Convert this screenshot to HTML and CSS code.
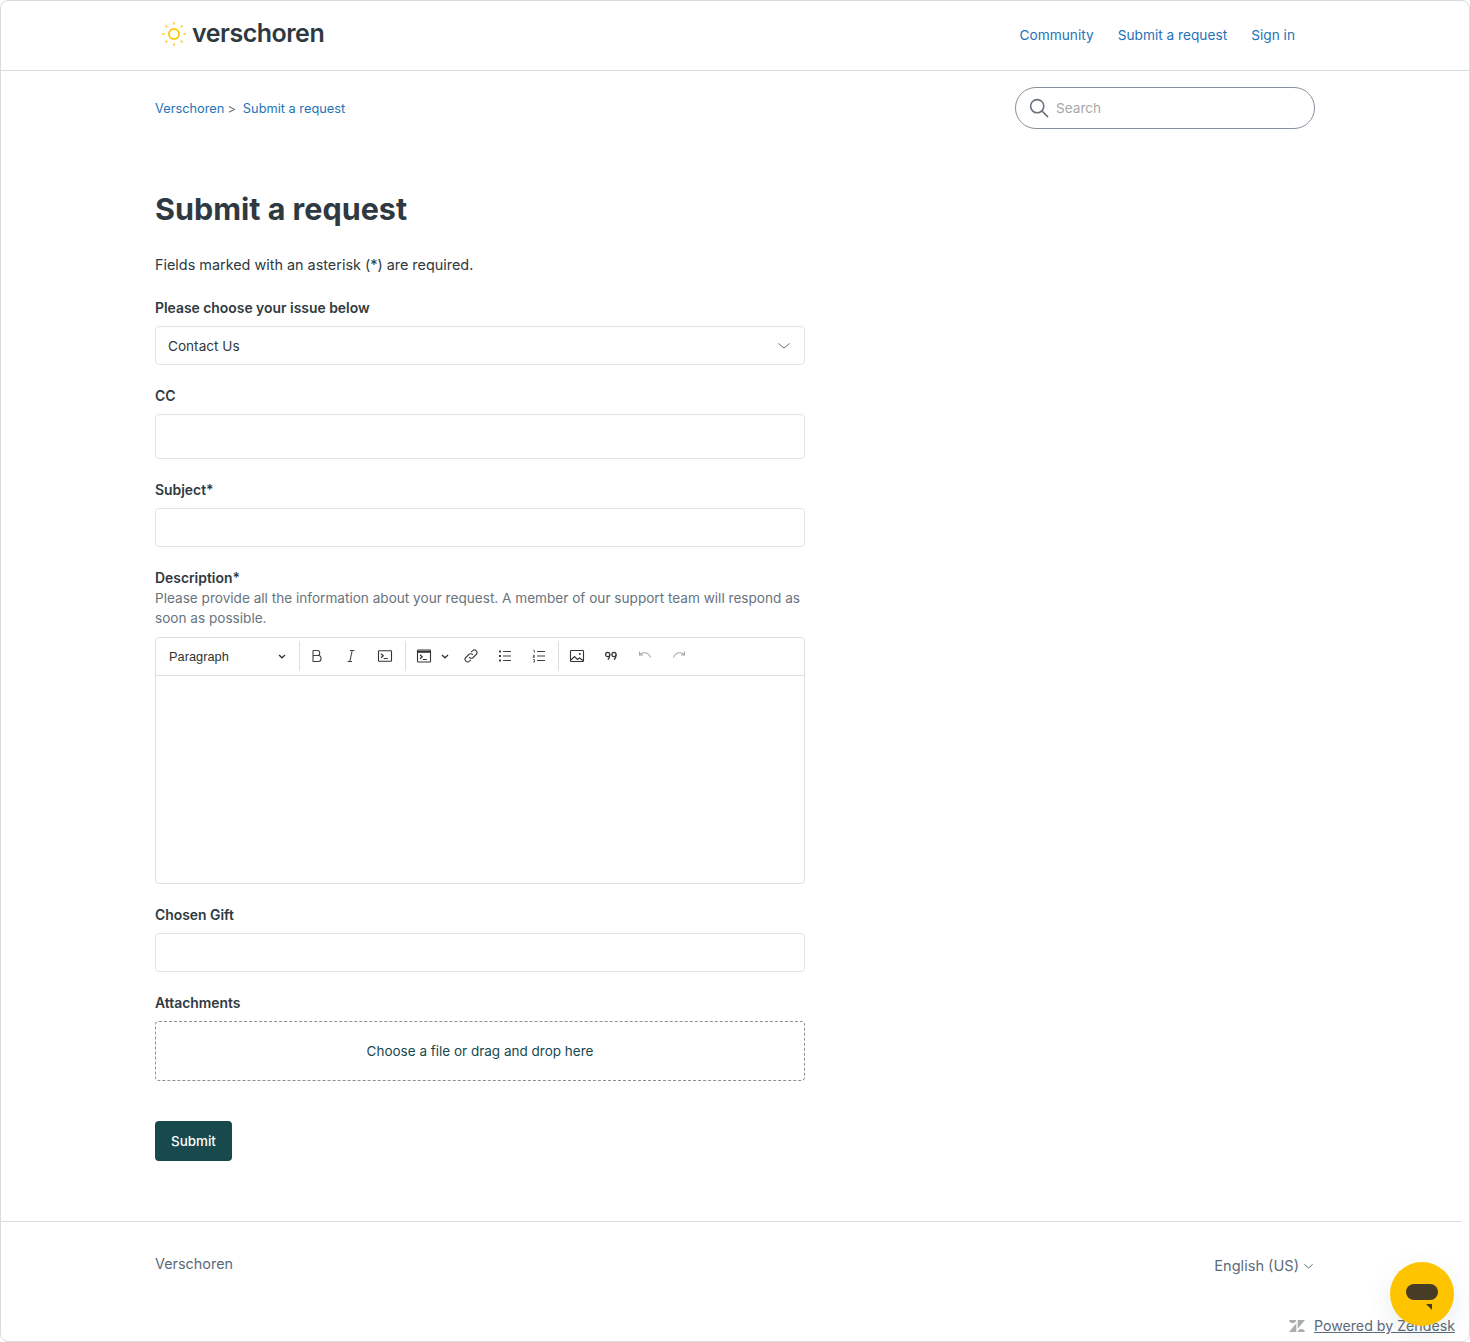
FILE: index.html
```html
<!DOCTYPE html>
<html lang="en">
<head>
    <meta charset="UTF-8">
    <title>Submit a request – Verschoren</title>
    <link rel="stylesheet" href="styles.css">
</head>
<body>
    <div class="frame">
        <header class="site-header">
            <div class="wrap header-inner">
                <a class="logo" href="#">
                    <svg class="logo-sun" width="24" height="24" viewBox="0 0 24 24" fill="none" stroke="#fbcb15">
                        <circle cx="12" cy="12" r="5" stroke-width="2"/>
                        <g stroke-width="1.6" stroke-linecap="round">
                            <path d="M12 .8v1.200M12 22v1.200M.8 12h1.200M22 12h1.200M4.100 4.100l.7.7M19.200 19.200l.7.7M4.100 19.900l.7-.7M19.200 4.800l.7-.7"/>
                        </g>
                    </svg>
                    <span class="logo-text">verschoren</span>
                </a>
                <nav class="top-nav">
                    <a href="#">Community</a>
                    <a href="#">Submit a request</a>
                    <a href="#">Sign in</a>
                </nav>
            </div>
        </header>

        <main class="wrap">
            <div class="sub-nav">
                <ol class="breadcrumbs">
                    <li><a href="#">Verschoren</a><span class="crumb-sep">&gt;</span></li>
                    <li><a href="#">Submit a request</a></li>
                </ol>
                <div class="search">
                    <svg width="20" height="20" viewBox="0 0 20 20" fill="none" stroke="#68737d" stroke-width="1.6" stroke-linecap="round">
                        <circle cx="8.2" cy="8.2" r="6.6"/>
                        <path d="M13 13l5.600 5.600"/>
                    </svg>
                    <span class="search-text">Search</span>
                </div>
            </div>

            <h1>Submit a request</h1>
            <p class="intro">Fields marked with an asterisk (*) are required.</p>

            <form class="request-form">
                <div class="field">
                    <label>Please choose your issue below</label>
                    <div class="input select">
                        <span>Contact Us</span>
                        <svg width="12" height="6" viewBox="0 0 12 6" fill="none" stroke="#68737d" stroke-linecap="round"><path d="M.7.7L6 5l5.300-4.300"/></svg>
                    </div>
                </div>
                <div class="field">
                    <label>CC</label>
                    <div class="input input-cc"></div>
                </div>
                <div class="field">
                    <label>Subject*</label>
                    <div class="input"></div>
                </div>
                <div class="field">
                    <label class="label-tight">Description*</label>
                    <p class="hint">Please provide all the information about your request. A member of our support team will respond as soon as possible.</p>
                    <div class="editor">
                        <div class="toolbar">
                            <div class="tool-group group-para">
                                <span>Paragraph</span>
                                <svg class="caret" width="8" height="5" viewBox="0 0 8 5" fill="none" stroke="#333" stroke-width="1.3"><path d="M1 1l3 2.800L7 1"/></svg>
                            </div>
                            <div class="tool-group group-text">
                                <svg width="18" height="18" viewBox="0 0 18 18" fill="none" stroke="#444" stroke-width="1.100"><path d="M5 3.500v11h5.500c3.400 0 3.400-6 0-6H5M5 3.500h4.500c3 0 3 5 0 5"/></svg>
                                <svg width="18" height="18" viewBox="0 0 18 18" fill="none" stroke="#444" stroke-width="1.100"><path d="M8 3.500h4.500M5.500 14.500H10M10.200 3.500L7.800 14.500"/></svg>
                                <svg width="18" height="18" viewBox="0 0 18 18" fill="none" stroke="#333" stroke-width="1.100"><rect x="2.500" y="3.800" width="13" height="10.400" rx=".8"/><path d="M5 6.700l2.200 2L5 10.700M7.800 11.500h4" stroke-width="1.200"/></svg>
                            </div>
                            <div class="tool-group group-insert">
                                <svg width="18" height="18" viewBox="0 0 18 18" fill="none" stroke="#333" stroke-width="1.100"><rect x="2.500" y="3" width="13" height="12" rx=".8"/><path d="M2.500 4.800h13" stroke-width="2"/><path d="M5 7.800l2.200 2L5 11.800M7.800 12.500h4" stroke-width="1.200"/></svg>
                                <svg class="caret" width="8" height="5" viewBox="0 0 8 5" fill="none" stroke="#333" stroke-width="1.300"><path d="M1 1l3 2.800L7 1"/></svg>
                                <svg class="tool-link" width="18" height="18" viewBox="0 0 18 18" fill="none" stroke="#444" stroke-width="1.100" stroke-linecap="round"><path d="M7.500 10.500a2.600 2.600 0 0 0 3.700 0l3-3a2.600 2.600 0 0 0-3.700-3.700L9.300 4.900"/><path d="M10.500 7.500a2.600 2.600 0 0 0-3.700 0l-3 3a2.600 2.600 0 0 0 3.700 3.700l1.200-1.100"/></svg>
                                <svg class="tool-list" width="18" height="18" viewBox="0 0 18 18" fill="none" stroke="#444" stroke-width="1.100"><path d="M7 4.500h8M7 9h8M7 13.500h8"/><path d="M3 4.500h2M3 9h2M3 13.500h2" stroke-width="1.800"/></svg>
                                <svg class="tool-list" width="18" height="18" viewBox="0 0 18 18" fill="none" stroke="#444" stroke-width="1.100"><path d="M7 4.500h8M7 9h8M7 13.500h8"/><path d="M3.400 3.300h1v2.500M3 8.300h1.500v1.200H3.200v1h1.400M3 12.500h1.500v2.500H3" stroke-width=".8"/></svg>
                            </div>
                            <div class="tool-group group-media">
                                <svg width="18" height="18" viewBox="0 0 18 18" fill="none" stroke="#333" stroke-width="1.100"><rect x="2.500" y="3.500" width="13" height="11" rx=".8"/><path d="M3 13l3.500-3.500 3 3 2-1.500 3.500 2.500"/><circle cx="11.800" cy="7" r="1" fill="#333" stroke="none"/></svg>
                                <svg width="18" height="18" viewBox="0 0 18 18" fill="none" stroke="#333" stroke-width="1.200"><circle cx="5.700" cy="7.500" r="2.100"/><path d="M7.800 7.500c0 2.600-.5 4.100-2 5.300"/><circle cx="12" cy="7.500" r="2.100"/><path d="M14.100 7.500c0 2.600-.5 4.100-2 5.300"/></svg>
                                <svg width="18" height="18" viewBox="0 0 18 18" fill="none" stroke="#a6a6a6" stroke-width="1.100"><path d="M3.500 4.500V8H7"/><path d="M3.500 8c3-3.200 8.500-3.500 11 2.500"/></svg>
                                <svg width="18" height="18" viewBox="0 0 18 18" fill="none" stroke="#a6a6a6" stroke-width="1.100"><path d="M14.500 4.500V8H11"/><path d="M14.500 8c-3-3.200-8.500-3.500-11 2.500"/></svg>
                            </div>
                        </div>
                        <div class="editor-body"></div>
                    </div>
                </div>
                <div class="field">
                    <label>Chosen Gift</label>
                    <div class="input"></div>
                </div>
                <div class="field">
                    <label>Attachments</label>
                    <div class="dropzone">Choose a file or drag and drop here</div>
                </div>
                <button class="submit" type="button">Submit</button>
            </form>
        </main>

        <footer class="site-footer">
            <div class="footer-inner">
                <span class="footer-name">Verschoren</span>
                <span class="lang">English (US)
                    <svg width="9" height="5" viewBox="0 0 9 5" fill="none" stroke="#5c6b7a" stroke-linecap="round"><path d="M.7.7L4.500 4 8.300.7"/></svg>
                </span>
            </div>
        </footer>

        <a class="powered" href="#">
            <svg width="16" height="12" viewBox="0 0 16 12" fill="#a8adb0"><path d="M7.300 3.300V12H0zM7.300 0A3.700 3.700 0 0 1 0 0zM8.700 12a3.700 3.700 0 0 1 7.300 0zM8.700 8.700V0H16z"/></svg>
            <span>Powered by Zendesk</span>
        </a>
        <div class="chat-btn">
            <svg width="32" height="28" viewBox="0 0 32 28">
                <rect y="0" width="32" height="16" rx="8" fill="#473d26"/>
                <path d="M20 20h6v6z" fill="#473d26"/>
            </svg>
        </div>
    </div>
</body>
</html>
```

FILE: styles.css
```css
* {
    box-sizing: border-box;
}

body {
    margin: 0;
    background: #fff;
    font-family: Inter, "Liberation Sans", Arial, sans-serif;
    font-size: 14px;
    line-height: 20px;
    color: #2f3941;
}

a {
    color: #1f73b7;
    text-decoration: none;
}

.frame {
    position: relative;
    height: 1342px;
    border: 1px solid #d8dcde;
    border-radius: 8px;
    overflow: hidden;
}

.wrap {
    width: 1160px;
    margin: 0 auto;
}

/* header */
.site-header {
    height: 70px;
    border-bottom: 1px solid #d8dcde;
}

.header-inner {
    display: flex;
    align-items: center;
    justify-content: space-between;
    height: 69px;
}

.logo {
    display: flex;
    align-items: center;
    gap: 6px;
    margin: -4px 0 0 7px;
}

.logo-text {
    margin-top: -2px;
    font-size: 25px;
    font-weight: 600;
    letter-spacing: -0.5px;
    color: #2f3941;
}

.top-nav {
    display: flex;
    gap: 24px;
    margin-top: -2px;
    padding-right: 20px;
    font-size: 13.7px;
}

/* breadcrumbs and search */
.sub-nav {
    display: flex;
    align-items: center;
    justify-content: space-between;
    padding-top: 16px;
}

.breadcrumbs {
    display: flex;
    gap: 7px;
    margin: 2px 0 0;
    padding: 0;
    list-style: none;
    font-size: 12.8px;
}

.crumb-sep {
    margin-left: 3px;
    color: #68737d;
}

.search {
    display: flex;
    align-items: center;
    gap: 7px;
    width: 300px;
    height: 42px;
    padding: 0 13px;
    border: 1px solid #87929d;
    border-radius: 21px;
    font-size: 13.6px;
}

.search-text {
    color: #a8a8a8;
}

h1 {
    margin: 60px 0 0;
    font-size: 30.5px;
    line-height: 40px;
    font-weight: 700;
    color: #2f3941;
}

.intro {
    margin: 26px 0 0;
    font-size: 14.4px;
}

/* form */
.request-form {
    width: 650px;
    margin-top: 22px;
}

.field {
    margin-bottom: 20px;
}

label {
    display: block;
    margin-bottom: 7.5px;
    padding-top: 1px;
    font-size: 13.9px;
    font-weight: 600;
}

.label-tight {
    margin-bottom: 0;
}

.hint {
    margin: 0 0 8.5px;
    font-size: 13.6px;
    color: #68737d;
}

.input {
    height: 39.5px;
    border: 1px solid #e1e3e5;
    border-radius: 4px;
}

.input-cc {
    height: 45.5px;
}

.select {
    display: flex;
    align-items: center;
    justify-content: space-between;
    padding: 1px 14px 0 12px;
    font-size: 13.6px;
}

/* editor */
.editor {
    height: 247.5px;
    border: 1px solid #dcdfe1;
    border-radius: 4px;
}

.toolbar {
    display: flex;
    align-items: center;
    height: 38px;
    border-bottom: 1px solid #dcdfe1;
}

.tool-group {
    display: flex;
    align-items: center;
    height: 30px;
    border-right: 1px solid #dedede;
}

.group-para {
    justify-content: space-between;
    width: 144px;
    padding: 1px 13px 0;
    font-family: "Liberation Sans", Arial, sans-serif;
    font-size: 12.8px;
    color: #333;
}

.group-text {
    gap: 16px;
    width: 106px;
    padding-left: 8px;
}

.group-insert {
    width: 153px;
    padding-left: 9px;
}

.group-media {
    gap: 16px;
    padding-left: 9px;
    border-right: 0;
}

.caret {
    margin-left: 8px;
}

.tool-link {
    margin-left: 13px;
}

.tool-list {
    margin-left: 16px;
}

.dropzone {
    display: flex;
    align-items: center;
    justify-content: center;
    height: 60px;
    border: 1px dashed #87929d;
    border-radius: 4px;
    font-size: 13.5px;
    color: #17494d;
}

.submit {
    display: block;
    width: 77px;
    height: 40px;
    margin-top: 40px;
    padding: 0;
    border: 0;
    border-radius: 4px;
    background: #17494d;
    color: #fff;
    font: 500 13.4px/20px Inter, "Liberation Sans", Arial, sans-serif;
}

/* footer */
.site-footer {
    margin: 60px 8px 0 0;
    border-top: 1px solid #d8dcde;
}

.footer-inner {
    display: flex;
    justify-content: space-between;
    width: 1160px;
    margin-left: 154px;
    padding-top: 32px;
    font-size: 14.4px;
    color: #5c6b7a;
}

.lang {
    display: flex;
    align-items: center;
    gap: 5px;
    height: 24px;
    margin-right: 2px;
    padding-top: 1px;
    font-size: 14.6px;
}

.powered {
    position: absolute;
    right: 14px;
    bottom: 5px;
    display: flex;
    align-items: center;
    gap: 9px;
    color: #5c6b7a;
    font-size: 14.2px;
}

.powered span {
    text-decoration: underline;
}

.chat-btn {
    position: absolute;
    right: 15px;
    bottom: 15px;
    display: flex;
    align-items: center;
    justify-content: center;
    width: 64px;
    height: 64px;
    padding-top: 8px;
    border-radius: 50%;
    background: #ffc400;
    box-shadow: 0 8px 24px rgba(23, 73, 77, 0.1);
}
```
